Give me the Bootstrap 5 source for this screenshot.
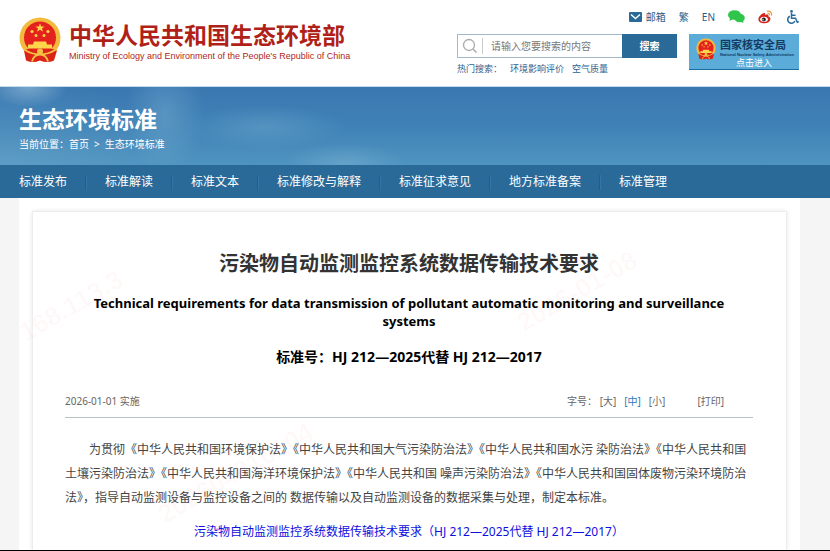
<!DOCTYPE html>
<html lang="zh-CN">
<head>
<meta charset="utf-8">
<meta name="viewport" content="width=device-width, initial-scale=1">
<title>生态环境标准 - 中华人民共和国生态环境部</title>
<link href="https://cdn.jsdelivr.net/npm/bootstrap@5.3.0/dist/css/bootstrap.min.css" rel="stylesheet">
<style>
:root { --brand: #2a6a99; --ink: #1f5c8b; }
body { font-family: "Noto Sans", "Noto Sans CJK SC", sans-serif; font-size: 12px; line-height: 18px; color: #444; border-bottom: 1px solid #000; }
a { text-decoration: none; }
.site-head { padding: 7px 31px 0 19px; height: 87px; border-bottom: 1px solid #c5dced; }
.brand-box { color: #b01f18; gap: 8px; padding-top: 10px; }
.brand-box:hover { color: #b01f18; }
.brand-cn { font-size: 23px; line-height: 34px; font-weight: 700; font-family: "Noto Sans CJK SC", sans-serif; }
.brand-en { font-family: "Liberation Sans", Arial, sans-serif; font-size: 9px; line-height: 10px; }
.tools { gap: 13px; font-size: 10px; line-height: 18px; height: 19px; }
.tools a { color: var(--ink); }
.find-area { gap: 12px; }
.find-box { width: 220px; }
.find-row { height: 24px; border: 1px solid #a3b8c9; border-right: 0; }
.find-row input { font-size: 10px; line-height: 16px; padding: 0 8px; border: 0; border-left: 1px solid #ccc; border-radius: 0; margin: 3px 0; min-height: 0; color: #777; box-shadow: none; }
.find-row input::placeholder { color: #777; opacity: 1; }
.find-row button { width: 55px; margin: -1px 0; background: var(--brand); color: #fff; font-size: 10px; font-weight: 700; line-height: 16px; padding: 0; border: 0; border-radius: 0; flex: none; }
.hot { font-size: 9px; line-height: 14px; color: #2c6190; padding-top: 4px; gap: 8px; }
.hot a { color: #2c6190; }
.nnsa { width: 110px; height: 36px; background: #5cacd9; border-bottom: 1px solid #1d6c9e; color: #123a63; padding: 3px 7px 0; gap: 4px; }
.nnsa-cn { font-size: 11px; line-height: 16px; font-weight: 700; white-space: nowrap; }
.nnsa-en { font-family: "Liberation Sans", sans-serif; font-size: 4px; line-height: 4px; font-weight: 700; white-space: nowrap; }
.nnsa-go { font-size: 9px; line-height: 12px; color: #fff; padding-left: 16px; }
.hero { height: 78px; padding: 18px 19px 0; color: #fff;
  background:
    radial-gradient(ellipse 40px 20px at 28px 0, #a9cbdf88, transparent),
    radial-gradient(ellipse 40px 60px at 165px 28px, #8fc0dc55, transparent),
    radial-gradient(ellipse 80px 22px at 265px 40px, #80b4d555, transparent),
    radial-gradient(ellipse 60px 20px at 345px 76px, #8fc0dc55, transparent),
    radial-gradient(ellipse 180px 90px at 0 78px, #7ab0d055, transparent),
    linear-gradient(#3a77b1, #3f82b6 50%, #4f94c0); }
.hero h1 { font-size: 23px; line-height: 28px; font-weight: 700; }
.crumbs { font-size: 10px; line-height: 16px; padding-top: 3px; gap: 5px; }
.crumbs a { color: #fff; }
.main-nav { background: var(--brand); height: 33px; padding-left: 19px; }
.main-nav li { display: flex; align-items: center; }
.main-nav li + li::before { content: ""; width: 2px; height: 15px; margin: 0 18px; background: #215d8a; border-right: 1px solid #3376a6; }
.main-nav a { color: #fff; font-size: 12px; line-height: 34px; }
main { background: #f5f5f5; padding: 0 30px 0 19px; }
.sheet { background: #fff; padding: 13px 13px 0; }
.paper { border: 1px solid #ededed; border-bottom: 0; box-shadow: 0 0 4px #e6e6e6; padding: 38px 33px 0 32px; }
.paper h2 { font-size: 20px; line-height: 28px; font-weight: 700; color: #333; margin-bottom: 16px; }
.sub { font-size: 13px; line-height: 18px; font-weight: 700; color: #000; margin: 0; padding: 0 24px; }
.std-no { font-size: 14px; line-height: 18px; font-weight: 700; color: #000; margin: 18px 0 0; }
.meta { font-size: 10px; line-height: 18px; color: #666; border-bottom: 1px solid #b9c4c6; padding: 0 29px 7px 0; margin-top: 26px; }
.meta a { color: #666; }
.meta a.now { color: #2f7bb8; }
.sizes { gap: 8px; }
.prose { line-height: 24px; text-indent: 2em; margin: 20px -4px 0 0; }
.doc-link { color: #0e0ee0; line-height: 24px; }
.doc-line { padding-top: 10px; }
.stamp { inset: 0; width: 100%; height: 100%; pointer-events: none; }
</style>
</head>
<body class="d-flex flex-column min-vh-100 position-relative">

<svg width="0" height="0" class="position-absolute" aria-hidden="true">
  <symbol id="emblem" viewBox="0 0 42 45">
    <circle cx="21" cy="20.500" r="20.500" fill="#f3bb3d"/>
    <circle cx="21" cy="20" r="16" fill="#e3211d"/>
    <path d="M5 33 10 31Q21 38 32 31L38 33 35 43Q28 46 21 43Q14 46 7 43Z" fill="#dc2318"/>
    <path d="m21 6 1.200 3H25.500L23 11l1 3.200L21 12.300 18 14.200 19 11 16.500 9H19.800Z" fill="#ffd54a"/>
    <g fill="#ffd54a"><circle cx="13" cy="14" r="1.600"/><circle cx="29" cy="14" r="1.600"/><circle cx="17" cy="18" r="1.500"/><circle cx="25" cy="18" r="1.500"/>
    <path d="M15 24h12l1 3h5v4H9v-4h5z"/></g>
    <path d="M5 32Q21 42 37 32M13 44q2-7 8-7t8 7" fill="none" stroke="#f4c043" stroke-width="1.800"/>
    <circle cx="21" cy="34" r="3" fill="#f4c043"/>
  </symbol>
</svg>

<header class="site-head d-flex justify-content-between">
  <a href="#" class="brand-box d-flex align-items-start">
    <svg width="42" height="46" aria-hidden="true"><use href="#emblem"/></svg>
    <span class="d-flex flex-column">
      <span class="brand-cn">中华人民共和国生态环境部</span>
      <span class="brand-en">Ministry of Ecology and Environment of the People's Republic of China</span>
    </span>
  </a>
  <div class="d-flex flex-column align-items-end">
    <div class="tools d-flex align-items-center">
      <a href="#" class="d-flex align-items-center gap-1"><svg width="13" height="10" viewBox="0 0 13 10" aria-hidden="true"><rect width="13" height="10" rx="1" fill="#2a6a99"/><path d="m2 2.500 4.500 4 4.500-4" fill="none" stroke="#fff" stroke-width="1.400"/></svg>邮箱</a>
      <a href="#">繁</a>
      <a href="#">EN</a>
      <a href="#" aria-label="微信" class="d-flex"><svg width="17" height="13" viewBox="0 0 17 13"><g fill="#2fc54a"><ellipse cx="6.500" cy="5" rx="6.500" ry="4.800"/><path d="m2 8-.5 3L5 9z"/><ellipse cx="11.500" cy="8" rx="5.300" ry="4.200"/><path d="m12 11.500 3.500 1.500-.5-3z"/></g></svg></a>
      <a href="#" aria-label="微博" class="d-flex"><svg width="15" height="14" viewBox="0 0 15 14"><path d="M6 3C3 4 .4 7 .4 9.300c0 5.500 12 5.500 12-.5 0-1.300-1-2-2-2.300.4-2-1-2.500-3.400-1.500C7.500 3.400 7 2.800 6 3z" fill="#d8241b"/><ellipse cx="6" cy="9.300" rx="3.800" ry="2.600" fill="#fff"/><circle cx="5.800" cy="9.500" r="2" fill="#222"/><circle cx="5" cy="9.700" r=".7" fill="#fff"/><path d="M9 1.200c3-.8 5 1.500 4.500 4.500M9.500 3.400c1.500-.3 2.300.7 2 2" fill="none" stroke="#f0993a" stroke-width="1.200"/></svg></a>
      <a href="#" aria-label="无障碍" class="d-flex"><svg width="13" height="14" viewBox="0 0 13 14"><g fill="none" stroke="#2a6a99" stroke-width="1.500"><path d="M5.500 3v5.200h4l1.800 4 1.400-.7M5.500 5.300h4M3.800 6.200A3.700 3.700 0 1 0 8.800 11"/></g><circle cx="5.500" cy="1.400" r="1.400" fill="#2a6a99"/></svg></a>
    </div>
    <div class="find-area d-flex align-items-start pt-2">
      <form class="find-box">
        <div class="find-row d-flex">
          <label for="q" class="d-flex align-items-center px-1"><svg width="16" height="16" viewBox="0 0 16 16" role="img" aria-label="搜索"><circle cx="7" cy="7" r="5.500" fill="none" stroke="#aaa" stroke-width="1.300"/><path d="m11 11 3.500 3.500" stroke="#aaa" stroke-width="1.500"/></svg></label>
          <input id="q" class="form-control" type="text" placeholder="请输入您要搜索的内容">
          <button type="button" class="btn">搜索</button>
        </div>
        <div class="hot d-flex"><span>热门搜索：</span><a href="#">环境影响评价</a><a href="#">空气质量</a></div>
      </form>
      <a href="#" class="nnsa d-flex">
        <svg width="20" height="24" viewBox="0 0 42 45" class="flex-shrink-0" aria-hidden="true"><use href="#emblem"/></svg>
        <span class="d-flex flex-column">
          <span class="nnsa-cn">国家核安全局</span>
          <span class="nnsa-en">National Nuclear Safety Administration</span>
          <span class="nnsa-go">点击进入</span>
        </span>
      </a>
    </div>
  </div>
</header>

<section class="hero">
  <h1 class="mb-0">生态环境标准</h1>
  <div class="crumbs d-flex"><span>当前位置：<a href="#">首页</a></span><span>&gt;</span><a href="#">生态环境标准</a></div>
</section>

<nav class="main-nav">
  <ul class="list-unstyled d-flex mb-0">
    <li><a href="#">标准发布</a></li>
    <li><a href="#">标准解读</a></li>
    <li><a href="#">标准文本</a></li>
    <li><a href="#">标准修改与解释</a></li>
    <li><a href="#">标准征求意见</a></li>
    <li><a href="#">地方标准备案</a></li>
    <li><a href="#">标准管理</a></li>
  </ul>
</nav>

<main class="flex-grow-1 d-flex flex-column">
  <div class="sheet flex-grow-1 d-flex flex-column">
    <article class="paper flex-grow-1">
      <h2 class="text-center">污染物自动监测监控系统数据传输技术要求</h2>
      <p class="sub text-center">Technical requirements for data transmission of pollutant automatic monitoring and surveillance systems</p>
      <p class="std-no text-center">标准号：HJ 212—2025代替 HJ 212—2017</p>
      <div class="meta d-flex justify-content-between">
        <span>2026-01-01 实施</span>
        <div class="sizes d-flex"><span>字号： <a href="#">[大]</a></span><a href="#" class="now">[中]</a><a href="#">[小]</a><a href="#" class="ms-4">[打印]</a></div>
      </div>
      <p class="prose mb-0">为贯彻《中华人民共和国环境保护法》《中华人民共和国大气污染防治法》《中华人民共和国水污 染防治法》《中华人民共和国土壤污染防治法》《中华人民共和国海洋环境保护法》《中华人民共和国 噪声污染防治法》《中华人民共和国固体废物污染环境防治法》，指导自动监测设备与监控设备之间的 数据传输以及自动监测设备的数据采集与处理，制定本标准。</p>
      <p class="doc-line text-center mb-0"><a href="#" class="doc-link">污染物自动监测监控系统数据传输技术要求（HJ 212—2025代替 HJ 212—2017）</a></p>
    </article>
  </div>
</main>

<svg class="stamp position-absolute" aria-hidden="true" fill="#e03020" fill-opacity=".035" font-family="Liberation Sans, sans-serif" font-size="26" font-weight="700">
  <text transform="translate(26 342) rotate(-30)">168.113.3</text>
  <text transform="translate(165 524) rotate(-30)">202604010104</text>
  <text transform="translate(524 332) rotate(-30)">2026-01-08</text>
</svg>

<script src="https://cdn.jsdelivr.net/npm/bootstrap@5.3.0/dist/js/bootstrap.bundle.min.js"></script>
</body>
</html>
